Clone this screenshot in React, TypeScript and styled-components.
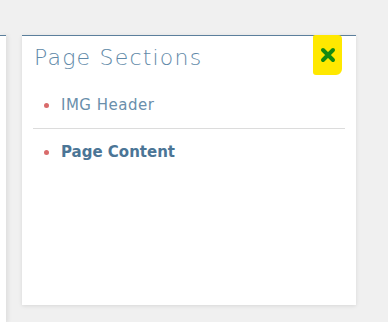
import styled, { createGlobalStyle } from 'styled-components';

const GlobalStyle = createGlobalStyle`
  body {
    margin: 0;
    background: #f0f0f0;
    font-family: 'DejaVu Sans', 'Open Sans', sans-serif;
  }
`;

const sections = [
  { name: 'IMG Header', active: false },
  { name: 'Page Content', active: true },
];

const App = () => {
  return (
    <>
      <GlobalStyle />
      <StyledPage>
        <StyledSidePanel />
        <StyledCard>
          <StyledHeader>
            <StyledTitle>Page Sections</StyledTitle>
            <StyledClose aria-label="close">
              <svg width="16" height="16" viewBox="0 0 16 16">
                <path
                  d="M3 3 L13 13 M13 3 L3 13"
                  stroke="#138a12"
                  strokeWidth="4"
                  strokeLinecap="round"
                />
              </svg>
            </StyledClose>
          </StyledHeader>
          <StyledList>
            {sections.map((s) => (
              <StyledItem key={s.name} $active={s.active}>
                <StyledDot />
                {s.name}
              </StyledItem>
            ))}
          </StyledList>
        </StyledCard>
      </StyledPage>
    </>
  );
};

export default App;

const StyledPage = styled.div`
  display: flex;
  align-items: flex-start;
  padding-top: 35px;
  height: 322px;
  box-sizing: border-box;
`;

const StyledSidePanel = styled.div`
  width: 6px;
  height: 287px;
  background: #fff;
  border-top: 1px solid #5b7f9c;
  box-shadow: 2px 0 4px rgba(0, 0, 0, 0.08);
`;

const StyledCard = styled.div`
  margin-left: 16px;
  width: 334px;
  height: 270px;
  background: #fff;
  border-top: 1px solid #5b7f9c;
  box-shadow: 0 1px 4px rgba(0, 0, 0, 0.1);
  box-sizing: border-box;
`;

const StyledHeader = styled.div`
  display: flex;
  align-items: flex-start;
  justify-content: space-between;
  padding: 0 14px 0 12px;
`;

const StyledTitle = styled.h2`
  margin: 7px 0 0;
  font-size: 22px;
  line-height: 30px;
  font-weight: 200;
  letter-spacing: 1.2px;
  color: #6189a8;
`;

const StyledClose = styled.div`
  width: 29px;
  height: 40px;
  margin-top: -1px;
  background: #ffe800;
  border-radius: 2px 4px 6px 3px;
  display: flex;
  align-items: center;
  justify-content: center;
`;

const StyledList = styled.ul`
  list-style: none;
  margin: 7px 11px 0;
  padding: 0;
`;

const StyledItem = styled.li<{ $active: boolean }>`
  display: flex;
  align-items: center;
  height: 46px;
  padding-left: 11px;
  font-size: 15px;
  font-weight: ${(p) => (p.$active ? 700 : 400)};
  letter-spacing: ${(p) => (p.$active ? '0' : '0.5px')};
  color: ${(p) => (p.$active ? '#4b7596' : '#6a8fab')};
  & + & {
    border-top: 1px solid #dcdcdc;
  }
`;

const StyledDot = styled.span`
  width: 5px;
  height: 5px;
  border-radius: 50%;
  background: #d96b6b;
  margin-right: 12px;
`;
